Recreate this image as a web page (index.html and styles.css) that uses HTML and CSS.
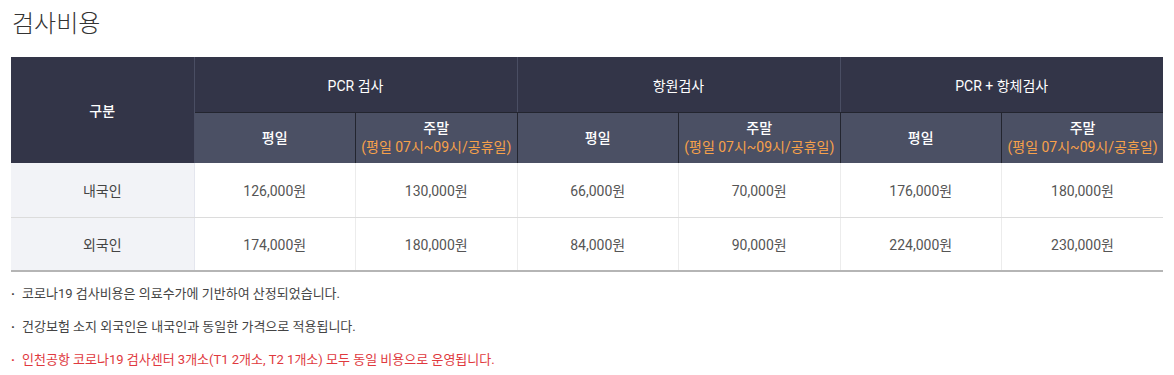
FILE: index.html
```html
<!DOCTYPE html>
<html lang="ko">
<head>
<meta charset="utf-8">
<link rel="stylesheet" href="styles.css">
</head>
<body>
<div class="page">
  <h2 class="title">검사비용</h2>
  <table class="cost">
    <colgroup>
      <col class="c-first">
      <col class="c"><col class="c"><col class="c"><col class="c"><col class="c"><col class="c">
    </colgroup>
    <thead>
      <tr class="h1">
        <th rowspan="2" class="first">구분</th>
        <th colspan="2">PCR 검사</th>
        <th colspan="2">항원검사</th>
        <th colspan="2">PCR + 항체검사</th>
      </tr>
      <tr class="h2">
        <th>평일</th>
        <th>주말<br><span class="sub">(평일 07시~09시/공휴일)</span></th>
        <th>평일</th>
        <th>주말<br><span class="sub">(평일 07시~09시/공휴일)</span></th>
        <th>평일</th>
        <th>주말<br><span class="sub">(평일 07시~09시/공휴일)</span></th>
      </tr>
    </thead>
    <tbody>
      <tr>
        <th class="rowh">내국인</th>
        <td>126,000원</td><td>130,000원</td>
        <td>66,000원</td><td>70,000원</td>
        <td>176,000원</td><td>180,000원</td>
      </tr>
      <tr>
        <th class="rowh">외국인</th>
        <td>174,000원</td><td>180,000원</td>
        <td>84,000원</td><td>90,000원</td>
        <td>224,000원</td><td>230,000원</td>
      </tr>
    </tbody>
  </table>
  <ul class="notes">
    <li>코로나19 검사비용은 의료수가에 기반하여 산정되었습니다.</li>
    <li>건강보험 소지 외국인은 내국인과 동일한 가격으로 적용됩니다.</li>
    <li class="red">인천공항 코로나19 검사센터 3개소(T1 2개소, T2 1개소) 모두 동일 비용으로 운영됩니다.</li>
  </ul>
</div>
</body>
</html>
```

FILE: styles.css
```css
html, body {
  margin: 0;
  padding: 0;
  background: #fff;
}
body {
  font-family: "Roboto", "Noto Sans CJK KR", sans-serif;
  color: #555;
}
.page {
  padding: 0 11px;
}
.title {
  margin: 0;
  padding-top: 6px;
  height: 57px;
  box-sizing: border-box;
  font-family: "Noto Sans CJK KR", sans-serif;
  font-weight: 300;
  font-size: 24px;
  line-height: 32px;
  color: #333;
  padding-left: 1px;
}
.cost {
  width: 1152px;
  border-collapse: collapse;
  table-layout: fixed;
  font-size: 14px;
}
.c-first { width: 183px; }
.c { width: 161.5px; }
.cost th, .cost td {
  text-align: center;
  vertical-align: middle;
  padding: 0;
}
.h1 th {
  background: #333548;
  color: #fff;
  font-weight: 400;
  height: 55px;
  border-left: 1px solid #4a4e63;
  border-bottom: 1px solid #23252f;
}
.h1 th.first {
  border-left: none;
  border-bottom: none;
  border-right: 1px solid #4a4e63;
  font-weight: 500;
}
.h2 th {
  background: #4b5064;
  color: #fff;
  font-weight: 500;
  height: 50px;
  line-height: 19px;
  border-left: 1px solid #23252f;
}
.h2 th:first-child { border-left: none; }
.sub {
  color: #f7a14a;
  font-weight: 400;
}
tbody th.rowh {
  background: #f2f3f7;
  font-weight: 400;
  color: #444;
  border-right: 1px solid #e4e6ee;
}
tbody td, tbody th {
  height: 54px;
  border-bottom: 1px solid #dcdcdc;
  color: #555;
  font-weight: 400;
}
tbody td {
  border-left: 1px solid #ececec;
}
tbody tr:last-child td, tbody tr:last-child th {
  border-bottom: 2px solid #b5b5b5;
  height: 52px;
}
.notes {
  list-style: none;
  margin: 0;
  padding: 5px 0 0 0;
  font-size: 13px;
  color: #444;
}
.notes li {
  position: relative;
  padding-left: 11px;
  line-height: 33px;
}
.notes li::before {
  content: "·";
  position: absolute;
  left: 0;
  top: 0;
  font-weight: 700;
}
.notes li.red {
  color: #e0393e;
}
```
